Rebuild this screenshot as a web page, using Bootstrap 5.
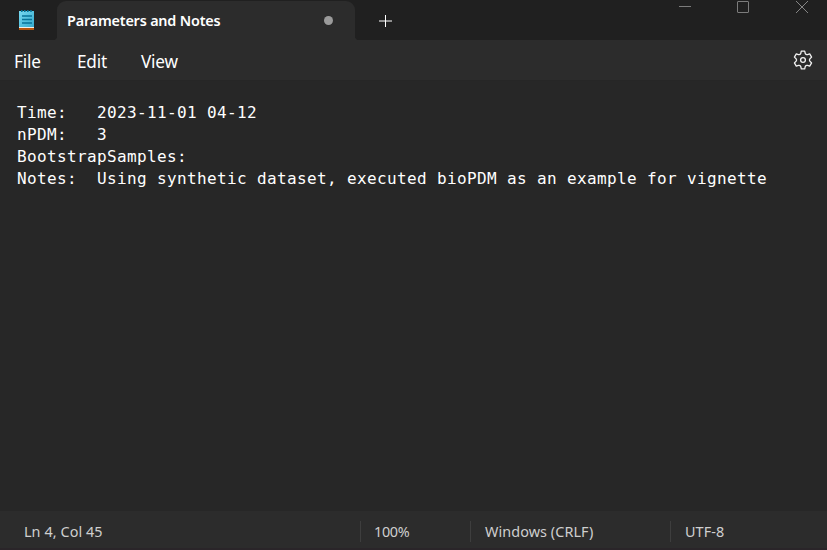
<!DOCTYPE html>
<html lang="en" data-bs-theme="dark">
<head>
<meta charset="utf-8">
<meta name="viewport" content="width=device-width, initial-scale=1">
<title>Parameters and Notes</title>
<link href="https://cdn.jsdelivr.net/npm/bootstrap@5.3.0/dist/css/bootstrap.min.css" rel="stylesheet">
<style>
body { font-family: "Noto Sans", "Open Sans", sans-serif; background: #272727; color: #fff; }
svg { display: block; }
.titlebar { height: 40px; background: #202020; }
.app-icon { width: 57px; padding: 10px 0 0 18px; }
.doc-tab { width: 298px; height: 39px; margin-top: 1px; background: #2c2c2c; border-radius: 9px 9px 0 0; position: relative; padding: 0 22px 0 10px; }
.doc-tab::before, .doc-tab::after { content: ""; position: absolute; bottom: 0; width: 4px; height: 4px; }
.doc-tab::before { left: -4px; background: radial-gradient(circle at 0 0, transparent 4px, #2c2c2c 4.5px); }
.doc-tab::after { right: -4px; background: radial-gradient(circle at 100% 0, transparent 4px, #2c2c2c 4.5px); }
.doc-name { font-size: 14.4px; font-weight: 600; letter-spacing: -.19px; line-height: 20px; }
.dirty { width: 9px; height: 9px; background: #9b9b9b; }
.add-tab { padding: 14px 0 0 24px; }
.win-buttons { gap: 46px; padding-right: 18px; }
.menubar { height: 40px; background: #2c2c2c; padding: 0 14px; font-size: 17.2px; letter-spacing: -.2px; line-height: 22px; }
.menubar .nav-item { color: #fff; padding-top: 3px; }
.m-file { width: 63px; }
.m-edit { width: 64px; }
.editor { background: #272727; padding: 21px 17px; border-top: 1px solid #262626; }
.editor pre { font-family: "DejaVu Sans Mono", monospace; font-size: 16px; letter-spacing: .368px; line-height: 22px; color: #fff; tab-size: 8; overflow: visible; }
.statusbar { height: 39px; background: #2c2c2c; border-bottom: 2px solid #2a2529; font-size: 14.4px; letter-spacing: .08px; line-height: 21px; color: #cfcfcf; padding-top: 10px; }
.statusbar > div { height: 21px; }
.statusbar > div + div { border-left: 1px solid #3e3e3e; padding-left: 14px; }
.st-pos { width: 360px; padding-left: 24px; }
.statusbar > .st-zoom { width: 110px; letter-spacing: -.3px; padding-left: 13px; }
.st-eol { width: 200px; }
</style>
</head>
<body class="vh-100 d-flex flex-column overflow-hidden">
<header class="titlebar d-flex flex-shrink-0">
  <div class="app-icon">
    <svg width="18" height="21" viewBox="0 0 18 21">
      <defs><linearGradient id="pad" x1="0" y1="0" x2="1" y2="1"><stop offset="0" stop-color="#78d9f0"/><stop offset="1" stop-color="#35aacd"/></linearGradient></defs>
      <rect x="1" y="17" width="15" height="3" fill="#b6530c"/>
      <rect x="1" y="16.5" width="15" height="1.5" fill="#f1eee9"/>
      <rect x="1" y="1" width="15" height="16" fill="url(#pad)"/>
      <path d="M3.8 0v2M6.8 0v2M9.8 0v2M13 0v2" stroke="#087398" stroke-width="1.6"/>
      <path d="M4 6h10M4 9.5h10M4 13h10" stroke="#087398" stroke-width="1.7"/>
    </svg>
  </div>
  <div class="doc-tab d-flex align-items-center justify-content-between">
    <span class="doc-name text-nowrap">Parameters and Notes</span>
    <span class="dirty rounded-circle"></span>
  </div>
  <div class="add-tab">
    <svg width="14" height="14" fill="none" stroke="#fff"><path d="M6.5 1v12M0 7h13"/></svg>
  </div>
  <div class="win-buttons d-flex ms-auto">
    <svg width="12" height="14" stroke="#7c7c7c"><path d="M0 6.500h12"/></svg>
    <svg width="12" height="14" fill="none" stroke="#7c7c7c"><rect x=".5" y="1.500" width="11" height="11" rx=".5"/></svg>
    <svg width="14" height="14" stroke="#858585"><path d="M1 1l12 12M13 1l-12 12"/></svg>
  </div>
</header>
<nav class="menubar d-flex align-items-center flex-shrink-0">
  <span class="nav-item m-file">File</span>
  <span class="nav-item m-edit">Edit</span>
  <span class="nav-item m-view">View</span>
  <svg class="ms-auto" width="20" height="20" viewBox="0 0 20 20" fill="none" stroke="#f2f2f2" stroke-width="1.300" stroke-linejoin="round">
    <path d="M8.300 1.200h3.400l.6 2.500q.8 1.300 2.200.9l2.200-.7 1.900 3.200-1.700 1.700q-1 1.200 0 2.400l1.700 1.700-1.900 3.200-2.200-.7q-1.400-.4-2.200.9l-.6 2.500h-3.400l-.6-2.500q-.8-1.300-2.200-.9l-2.200.7-1.900-3.200 1.700-1.700q1-1.200 0-2.400l-1.700-1.700 1.900-3.200 2.200.7q1.400.4 2.200-.9z"/><circle cx="10" cy="10" r="2.400"/>
  </svg>
</nav>
<main class="editor flex-grow-1">
<pre class="m-0">Time:	2023-11-01 04-12
nPDM:	3
BootstrapSamples:
Notes:	Using synthetic dataset, executed bioPDM as an example for vignette</pre>
</main>
<footer class="statusbar d-flex flex-shrink-0">
  <div class="st-pos">Ln 4, Col 45</div>
  <div class="st-zoom">100%</div>
  <div class="st-eol">Windows (CRLF)</div>
  <div>UTF-8</div>
</footer>
<script src="https://cdn.jsdelivr.net/npm/bootstrap@5.3.0/dist/js/bootstrap.bundle.min.js"></script>
</body>
</html>
